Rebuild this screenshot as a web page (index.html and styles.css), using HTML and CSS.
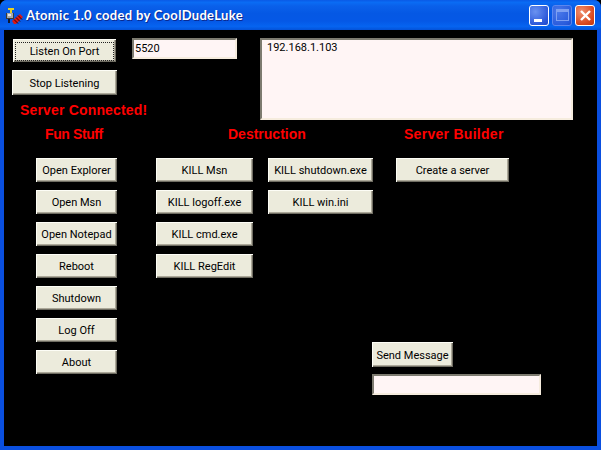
FILE: index.html
```html
<!DOCTYPE html>
<html lang="en">
<head>
<meta charset="utf-8">
<title>Atomic 1.0</title>
<link rel="stylesheet" href="styles.css">
</head>
<body>
<div class="window">
  <header class="titlebar">
    <svg class="app-icon" width="18" height="18" viewBox="0 0 18 18">
      <path d="M3 1h6v2H7v3H5V3H3z" fill="#e8d020"/>
      <rect x="1" y="6" width="8" height="6" fill="#3a3a3a"/>
      <rect x="2" y="6" width="6" height="5" fill="#a8a8a8"/>
      <rect x="3" y="7" width="3" height="2" fill="#e8e8e8"/>
      <rect x="3" y="12" width="2" height="4" fill="#101830"/>
      <path d="M7 14l8-7 3 3-7 7h-2z" fill="#d81818"/>
      <path d="M9 12.500l4 4M11 10.500l4 4M13 8.500l4 4" stroke="#300" stroke-width="1" fill="none"/>
    </svg>
    <span class="title">Atomic 1.0 coded by CoolDudeLuke</span>
    <div class="controls">
      <span class="ctl ctl-min"><i class="min-glyph"></i></span>
      <span class="ctl ctl-max"><i class="max-glyph"></i></span>
      <span class="ctl ctl-close">
        <svg width="13" height="13" viewBox="0 0 13 13"><path d="M2 2l9 9M11 2l-9 9" stroke="#fff" stroke-width="2.400" fill="none"/></svg>
      </span>
    </div>
  </header>
  <main class="client">
    <section class="top">
      <div class="connection">
        <button class="btn btn-listen"><span class="focus">Listen On Port</span></button>
        <button class="btn btn-stop">Stop Listening</button>
        <p class="status">Server Connected!</p>
      </div>
      <div class="field field-port">5520</div>
      <div class="field field-log">192.168.1.103</div>
    </section>
    <section class="headings">
      <h2 class="heading h-fun">Fun Stuff</h2>
      <h2 class="heading h-destruction">Destruction</h2>
      <h2 class="heading h-builder">Server Builder</h2>
    </section>
    <section class="panel">
      <div class="stack col-fun">
        <button class="btn">Open Explorer</button>
        <button class="btn">Open Msn</button>
        <button class="btn">Open Notepad</button>
        <button class="btn">Reboot</button>
        <button class="btn">Shutdown</button>
        <button class="btn">Log Off</button>
        <button class="btn">About</button>
      </div>
      <div class="stack col-kill">
        <button class="btn">KILL Msn</button>
        <button class="btn">KILL logoff.exe</button>
        <button class="btn">KILL cmd.exe</button>
        <button class="btn">KILL RegEdit</button>
      </div>
      <div class="stack col-kill2">
        <button class="btn">KILL shutdown.exe</button>
        <button class="btn">KILL win.ini</button>
      </div>
      <div class="stack col-builder">
        <button class="btn">Create a server</button>
      </div>
      <div class="message">
        <button class="btn btn-send">Send Message</button>
        <div class="field field-msg"></div>
      </div>
    </section>
  </main>
</div>
</body>
</html>
```
FILE: styles.css
```css
* { box-sizing: border-box; }
html, body { margin: 0; padding: 0; background: #000; }
body { width: 601px; height: 450px; overflow: hidden; font-family: "Liberation Sans", Arial, sans-serif; }

.window {
  width: 601px; height: 450px;
  display: flex; flex-direction: column;
  background: #0a4fe0;
  border-radius: 7px 7px 0 0;
  overflow: hidden;
}
.titlebar {
  height: 30px; flex: none;
  display: flex; align-items: center;
  padding: 0 6px 0 5px;
  background: linear-gradient(180deg, #0a5ae6 0%, #0a6cf4 8%, #0a60ea 20%, #0558e4 45%, #0558e6 70%, #0664f0 88%, #0452d8 100%);
}
.app-icon { flex: none; margin-top: 1px; }
.title {
  margin-left: 3px;
  color: #fff; font-weight: bold; font-size: 13px; letter-spacing: 0.33px;
  font-family: Lato, "Liberation Sans", sans-serif;
  text-shadow: 1px 1px 0 #0a2a90;
  white-space: nowrap;
}
.controls { margin-left: auto; display: flex; gap: 3px; }
.ctl {
  width: 20px; height: 21px;
  display: flex; align-items: center; justify-content: center;
  border: 1px solid #fff; border-radius: 3px;
  position: relative;
}
.ctl-min { background: radial-gradient(circle at 30% 30%, #6a92f0, #2a56d8 75%, #2048c8); }
.ctl-max { background: radial-gradient(circle at 30% 30%, #4a78ea, #2a5cdc 75%, #1f4ccc); border-color: #5c86ee; }
.ctl-close { background: radial-gradient(circle at 30% 30%, #f09070, #d8461c 70%, #c03810); }
.min-glyph { position: absolute; left: 4px; bottom: 3px; width: 8px; height: 3px; background: #fff; }
.max-glyph { width: 13px; height: 12px; border: 1px solid #7ea0f2; border-top-width: 3px; }

.client {
  flex: 1;
  margin: 0 4px 4px;
  background: #000;
  position: relative;
}

.btn {
  display: block;
  padding: 1px 0 0;
  height: 24px;
  font: 11px/1 Roboto, "Liberation Sans", Arial, sans-serif;
  white-space: nowrap;
  color: #000;
  background: #ecebdc;
  border: 0;
  border-radius: 0;
  box-shadow: inset 1px 1px 0 #fdfdf6, inset -1px -1px 0 #6f6d62, inset -2px -2px 0 #aca899;
}
.btn-listen { width: 103px; height: 23px; margin: 9px 0 0 9px; position: relative; }
.focus {
  display: flex; align-items: center; justify-content: center;
  height: 17px; margin: 0 3px;
  outline: 1px dotted #222;
}
.btn-stop { width: 105px; height: 25px; margin: 8px 0 0 8px; }

.field {
  background: #fff5f5;
  color: #000;
  font-family: Roboto, "Liberation Sans", Arial, sans-serif;
  font-size: 11px;
  line-height: 14px;
  border: 2px solid;
  border-color: #7d7b70 #f6ecde #f6ecde #7d7b70;
}

.top { display: flex; align-items: flex-start; height: 92px; }
.connection { width: 128px; flex: none; }
.status {
  margin: 7px 0 0 16px;
  color: #ff0000; font-weight: bold; font-size: 14px; line-height: 16px;
  white-space: nowrap; letter-spacing: 0.17px;
}
.field-port { width: 105px; height: 21px; margin-top: 8px; padding: 2px 0 0 1px; }
.field-log { width: 313px; height: 82px; margin: 8px 0 0 23px; padding: 1px 0 0 5px; }

.headings {
  display: grid;
  grid-template-columns: 224px 177px 1fr;
  height: 36px;
  padding-top: 4px;
}
.heading { margin: 0; color: #ff0000; font-weight: bold; font-size: 14px; line-height: 16px; white-space: nowrap; }
.h-fun { padding-left: 41px; letter-spacing: -0.4px; }
.h-destruction { letter-spacing: 0; }
.h-builder { letter-spacing: 0.28px; margin-left: -1px; }

.panel {
  display: grid;
  grid-template-columns: 32px 120px 112px 104px 24px 1fr;
  height: 216px;
}
.stack { display: flex; flex-direction: column; gap: 8px; grid-row: 1; }
.col-fun { grid-column: 2; width: 81px; }
.col-kill { grid-column: 3; width: 97px; }
.col-kill2 { grid-column: 4; width: 105px; }
.col-builder { grid-column: 6; width: 113px; }
.message { grid-column: 5 / -1; grid-row: 1; padding-top: 184px; }
.btn-send { width: 81px; height: 25px; }
.field-msg { width: 169px; height: 21px; margin-top: 7px; }
```
